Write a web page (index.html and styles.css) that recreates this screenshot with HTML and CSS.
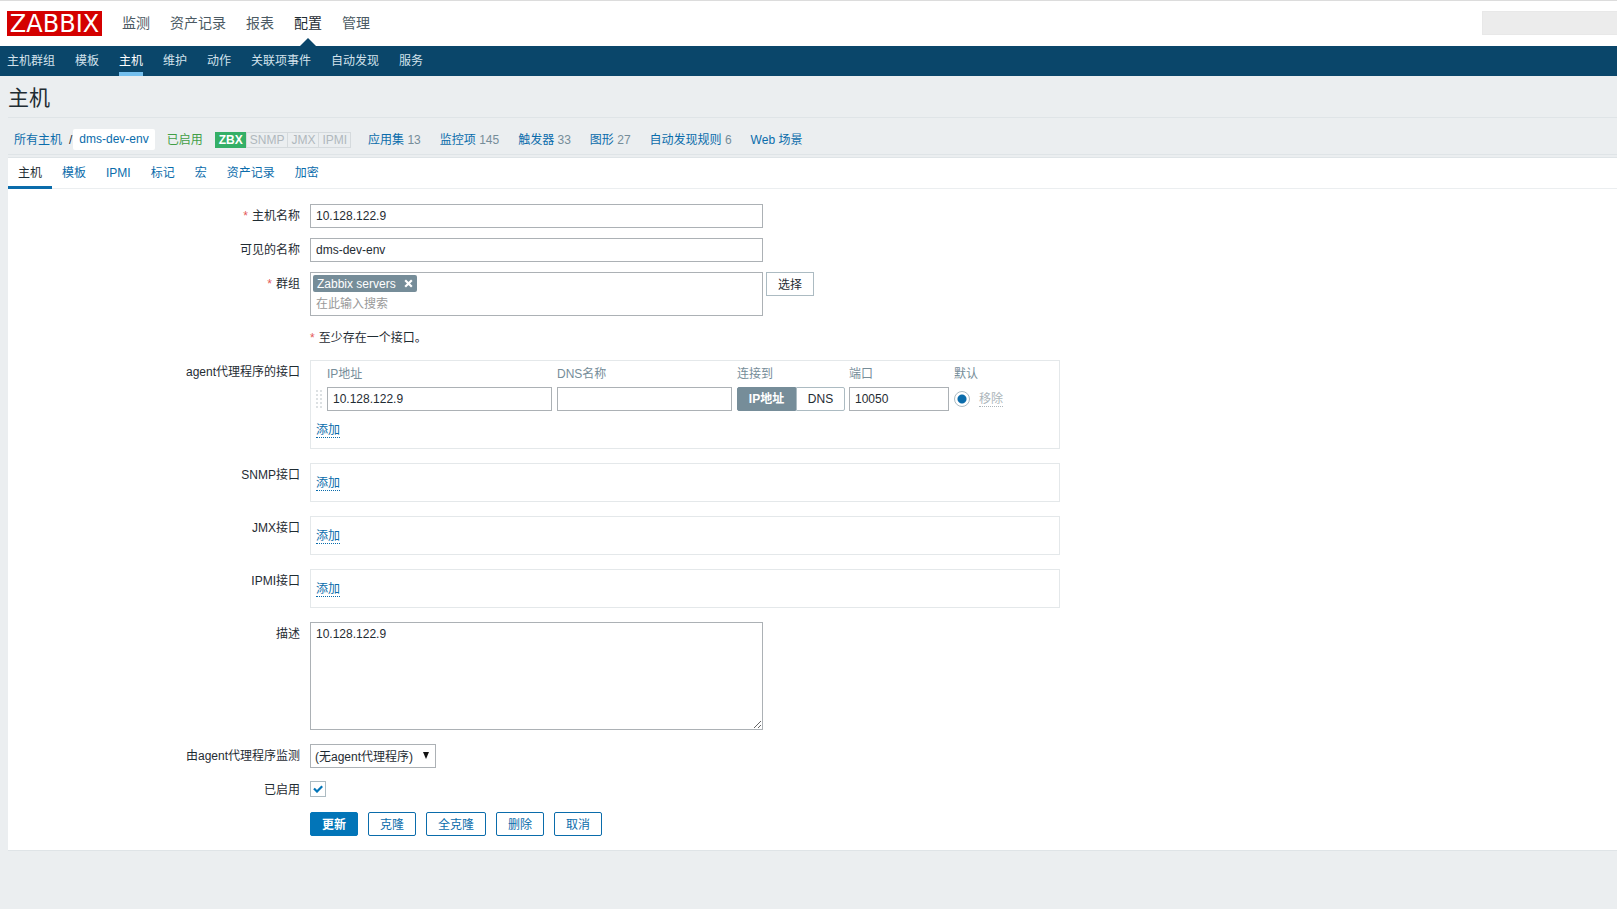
FILE: index.html
```html
<!DOCTYPE html>
<html lang="zh-CN">
<head>
<meta charset="utf-8">
<title>主机</title>
<link rel="stylesheet" href="styles.css">
</head>
<body>
<header class="top">
  <a class="logo" href="#">ZABBIX</a>
  <nav class="main-nav">
    <a href="#">监测</a>
    <a href="#">资产记录</a>
    <a href="#">报表</a>
    <a class="selected" href="#">配置</a>
    <a href="#">管理</a>
  </nav>
  <input class="search" type="text" aria-label="搜索">
</header>
<nav class="sub-nav">
  <a href="#">主机群组</a>
  <a href="#">模板</a>
  <a class="selected" href="#">主机</a>
  <a href="#">维护</a>
  <a href="#">动作</a>
  <a href="#">关联项事件</a>
  <a href="#">自动发现</a>
  <a href="#">服务</a>
</nav>
<main>
  <h1>主机</h1>
  <div class="object-bar">
    <div class="crumbs"><a href="#">所有主机</a><span class="slash">/</span><a class="current" href="#">dms-dev-env</a></div>
    <span class="enabled">已启用</span>
    <div class="status"><span class="on">ZBX</span><span>SNMP</span><span>JMX</span><span>IPMI</span></div>
    <div class="counts">
      <span><a href="#">应用集</a> 13</span>
      <span><a href="#">监控项</a> 145</span>
      <span><a href="#">触发器</a> 33</span>
      <span><a href="#">图形</a> 27</span>
      <span><a href="#">自动发现规则</a> 6</span>
      <span><a href="#">Web 场景</a></span>
    </div>
  </div>
  <section class="panel">
    <nav class="tabs">
      <a class="selected" href="#">主机</a>
      <a href="#">模板</a>
      <a href="#">IPMI</a>
      <a href="#">标记</a>
      <a href="#">宏</a>
      <a href="#">资产记录</a>
      <a href="#">加密</a>
    </nav>
    <form class="form">
      <div class="row">
        <label class="label required" for="host">主机名称</label>
        <input class="text wide" id="host" type="text" value="10.128.122.9">
      </div>
      <div class="row">
        <label class="label" for="visible">可见的名称</label>
        <input class="text wide" id="visible" type="text" value="dms-dev-env">
      </div>
      <div class="row">
        <label class="label required" for="groups">群组</label>
        <div class="multiselect wide">
          <span class="tag">Zabbix servers
            <button type="button" class="tag-remove" aria-label="移除 Zabbix servers"><svg width="9" height="9" viewBox="0 0 9 9"><path d="M1.2 1.2l6.6 6.6M7.800 1.200l-6.600 6.600" stroke="#fff" stroke-width="2.200" fill="none"/></svg></button>
          </span>
          <input id="groups" type="text" placeholder="在此输入搜索">
        </div>
        <button type="button" class="btn-grey">选择</button>
      </div>
      <div class="row">
        <span class="label"></span>
        <span class="note required">至少存在一个接口。</span>
      </div>
      <div class="row tall">
        <span class="label">agent代理程序的接口</span>
        <div class="box">
          <table class="interfaces">
            <thead>
              <tr><th class="c-drag"></th><th class="c-ip">IP地址</th><th class="c-dns">DNS名称</th><th class="c-conn">连接到</th><th class="c-port">端口</th><th class="c-def">默认</th><th></th></tr>
            </thead>
            <tbody>
              <tr>
                <td><svg class="drag" width="7" height="18" viewBox="0 0 7 18"><path d="M1 0v18M5 0v18" stroke="#dde1e3" stroke-width="2" stroke-dasharray="2 2" fill="none"/></svg></td>
                <td><input class="text" type="text" value="10.128.122.9" aria-label="IP地址"></td>
                <td><input class="text" type="text" aria-label="DNS名称"></td>
                <td>
                  <div class="segment">
                    <input type="radio" name="conn" id="conn-ip" checked><label for="conn-ip">IP地址</label>
                    <input type="radio" name="conn" id="conn-dns"><label for="conn-dns">DNS</label>
                  </div>
                </td>
                <td><input class="text" type="text" value="10050" aria-label="端口"></td>
                <td><input class="radio" type="radio" name="default" checked aria-label="默认"></td>
                <td><button type="button" class="link-btn" disabled>移除</button></td>
              </tr>
            </tbody>
          </table>
          <button type="button" class="link-btn add">添加</button>
        </div>
      </div>
      <div class="row tall">
        <span class="label">SNMP接口</span>
        <div class="box"><button type="button" class="link-btn add">添加</button></div>
      </div>
      <div class="row tall">
        <span class="label">JMX接口</span>
        <div class="box"><button type="button" class="link-btn add">添加</button></div>
      </div>
      <div class="row tall">
        <span class="label">IPMI接口</span>
        <div class="box"><button type="button" class="link-btn add">添加</button></div>
      </div>
      <div class="row tall">
        <label class="label" for="description">描述</label>
        <textarea class="text wide" id="description">10.128.122.9</textarea>
      </div>
      <div class="row">
        <label class="label" for="proxy">由agent代理程序监测</label>
        <div class="select">
          <select id="proxy"><option>(无agent代理程序)</option></select>
          <svg width="6" height="7" viewBox="0 0 6 7"><path d="M0 0h6L3 7z" fill="#111"/></svg>
        </div>
      </div>
      <div class="row">
        <label class="label" for="enabled">已启用</label>
        <div class="check">
          <input id="enabled" type="checkbox" checked>
          <svg width="10" height="8" viewBox="0 0 10 8"><path d="M1 3.500l3 3L9.200 1.200" stroke="#0275b8" stroke-width="2.200" fill="none"/></svg>
        </div>
      </div>
      <div class="row actions">
        <span class="label"></span>
        <div class="buttons">
          <button type="submit" class="btn primary">更新</button>
          <button type="button" class="btn">克隆</button>
          <button type="button" class="btn">全克隆</button>
          <button type="button" class="btn">删除</button>
          <button type="button" class="btn">取消</button>
        </div>
      </div>
    </form>
  </section>
</main>
</body>
</html>
```
FILE: styles.css
```css
* { box-sizing: border-box; }

body {
  margin: 0;
  background: #ebeef0;
  color: #1f2c33;
  font: 12px/14px "Liberation Sans", Arial, "Noto Sans CJK SC", sans-serif;
}

a { color: #0a6cab; text-decoration: none; }

input, textarea, select, button {
  margin: 0;
  font: inherit;
  color: inherit;
}

button { cursor: pointer; }

/* Header */
.top {
  display: flex;
  align-items: flex-start;
  height: 46px;
  padding-left: 7px;
  background: #fff;
  border-top: 1px solid #dcdcdc;
}

.logo {
  width: 95px;
  height: 25px;
  margin-top: 10px;
  background: #d40000;
  color: #fff;
  font: 24px/26px "DejaVu Sans", sans-serif;
  text-align: center;
}

.main-nav {
  display: flex;
  align-self: stretch;
  gap: 20px;
  margin-left: 20px;
}

.main-nav a {
  position: relative;
  color: #4b5a63;
  font-size: 14px;
  line-height: 44px;
}

.main-nav .selected { color: #1f2c33; }

.main-nav .selected::after {
  content: "";
  position: absolute;
  bottom: 0;
  left: 50%;
  margin-left: -8px;
  border: 8px solid transparent;
  border-top-width: 0;
  border-bottom-color: #0a466a;
}

.search {
  width: 135px;
  height: 24px;
  margin: 10px 0 0 auto;
  background: #ececec;
  border: 1px solid #e8e8e8;
  border-right: 0;
}

.sub-nav {
  display: flex;
  gap: 20px;
  height: 30px;
  padding-left: 7px;
  background: #0a466a;
}

.sub-nav a {
  color: #d3e2ec;
  line-height: 30px;
}

.sub-nav .selected {
  color: #fff;
  border-bottom: 4px solid #74bfee;
}

/* Title and host summary */
main { padding-left: 8px; }

h1 {
  margin: 0;
  height: 42px;
  border-bottom: 1px solid #dfe4e7;
  font-size: 21px;
  font-weight: normal;
  line-height: 44px;
}

.object-bar {
  display: flex;
  align-items: center;
  height: 37px;
  margin-bottom: 2px;
  padding: 7px 0 0 6px;
  border-bottom: 1px solid #dfe4e7;
}

.crumbs { display: flex; align-items: center; }
.slash { margin: 0 1px 0 7px; }

.current {
  padding: 3px 6px 4px;
  background: #fff;
  border-radius: 2px;
}

.enabled { margin: 0 12px; color: #429e47; }

.status { display: flex; }

.status span {
  padding: 0 3px;
  border: 1px solid #d5dadd;
  margin-left: -1px;
  color: #b0b8bd;
}

.status .on {
  margin-left: 0;
  background: #34af67;
  border-color: #34af67;
  color: #fff;
  font-weight: bold;
}

.counts {
  display: flex;
  gap: 19px;
  margin-left: 17px;
  color: #768d99;
}

/* Panel */
.panel {
  background: #fff;
  border: 1px solid #dfe4e7;
  border-width: 1px 0;
}

.tabs {
  display: flex;
  height: 31px;
  border-bottom: 1px solid #ebeef0;
}

.tabs a {
  height: 31px;
  padding: 0 10px;
  line-height: 30px;
}

.tabs .selected {
  border-bottom: 3px solid #0a6cab;
  color: #1f2c33;
}

.form { padding: 15px 0 14px; }

.row {
  display: flex;
  align-items: flex-start;
  margin-bottom: 10px;
}

.row.tall { margin-bottom: 14px; }
.row.actions { margin: 11px 0 0; }

.label {
  flex: none;
  width: 292px;
  margin-right: 10px;
  padding-top: 1px;
  line-height: 22px;
  text-align: right;
}

.note { line-height: 24px; }

.required::before {
  content: "*";
  margin-right: 4px;
  color: #e45959;
}

.text {
  width: 100%;
  height: 24px;
  padding: 0 5px;
  border: 1px solid #acb1b5;
  background: #fff;
}

.wide { width: 453px; }

textarea.text {
  height: 108px;
  padding: 4px 5px;
  resize: both;
}

.multiselect {
  display: flex;
  flex-direction: column;
  align-items: flex-start;
  height: 44px;
  padding: 2px;
  border: 1px solid #acb1b5;
}

.tag {
  display: flex;
  align-items: center;
  gap: 8px;
  height: 18px;
  padding: 0 4px;
  background: #768d99;
  border-radius: 2px;
  color: #fff;
}

.tag-remove {
  display: flex;
  padding: 0;
  border: 0;
  background: none;
}

.multiselect input {
  width: 100%;
  height: 22px;
  padding: 2px 3px 0;
  border: 0;
}

.multiselect input::placeholder { color: #999; }

.btn-grey {
  height: 24px;
  margin-left: 3px;
  padding: 2px 11px 0;
  background: #fff;
  border: 1px solid #acbbc2;
}

.box {
  width: 750px;
  padding: 0 5px 10px;
  border: 1px solid #e4e8ea;
}

/* The note line is followed by the first interface box */
.note { margin-bottom: 0; }

.link-btn {
  display: block;
  padding: 0;
  border: 0;
  border-bottom: 1px dotted #0a6cab;
  background: none;
  color: #0a6cab;
  line-height: 14px;
}

.link-btn:disabled { color: #acb5ba; border-color: #acb5ba; }
.link-btn.add { margin-top: 12px; }

/* Agent interface table */
.interfaces { border-collapse: collapse; table-layout: fixed; width: 100%; }

.interfaces th {
  height: 23px;
  padding: 2px 0 0;
  color: #768d99;
  font-weight: normal;
  text-align: left;
}

.interfaces td { padding: 3px 5px 0 0; }
.interfaces td:first-child { padding-right: 0; }
.interfaces td:nth-child(4) { padding-right: 4px; }

.c-drag { width: 11px; }
.c-ip { width: 230px; }
.c-dns { width: 180px; }
.c-conn { width: 112px; }
.c-port { width: 105px; }
.c-def { width: 25px; }

.interfaces .text { display: block; }
.drag { display: block; }

.segment { display: flex; position: relative; }
.segment input { position: absolute; opacity: 0; }

.segment label {
  flex: auto;
  height: 24px;
  border: 1px solid #acbbc2;
  border-radius: 0 2px 2px 0;
  line-height: 22px;
  text-align: center;
}

.segment input:checked + label {
  flex: none;
  width: 59px;
  background: #768d99;
  border-color: #768d99;
  border-radius: 2px 0 0 2px;
  color: #fff;
  font-weight: bold;
}

.radio {
  display: block;
  appearance: none;
  width: 16px;
  height: 16px;
  border: 1px solid #acbbc2;
  border-radius: 50%;
  background: radial-gradient(circle, #0a6cab 4px, #fff 5px);
}

/* Proxy select and enabled check box */
.select { position: relative; }

select {
  display: block;
  appearance: none;
  width: 126px;
  height: 24px;
  padding: 2px 4px 0;
  background: #fff;
  border: 1px solid #acb1b5;
  border-radius: 0;
}

.select svg {
  position: absolute;
  top: 8px;
  right: 7px;
  pointer-events: none;
}

.check {
  position: relative;
  padding: 3px 0;
}

.check input {
  display: block;
  appearance: none;
  width: 16px;
  height: 16px;
  border: 1px solid #acbbc2;
}

.check svg {
  position: absolute;
  top: 7px;
  left: 3px;
  pointer-events: none;
}

.buttons { display: flex; gap: 10px; }

.btn {
  height: 24px;
  padding: 2px 11px 0;
  background: #fff;
  border: 1px solid #0a6cab;
  border-radius: 2px;
  color: #0a6cab;
}

.btn.primary {
  background: #0275b8;
  border-color: #0275b8;
  color: #fff;
  font-weight: bold;
}
```
